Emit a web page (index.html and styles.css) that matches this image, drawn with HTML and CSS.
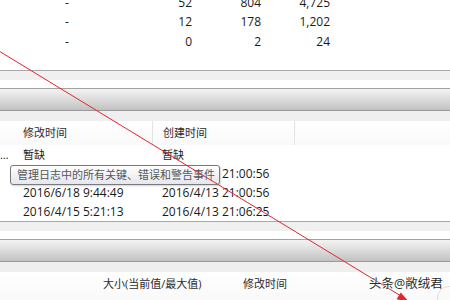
FILE: index.html
```html
<!DOCTYPE html>
<html lang="zh">
<head>
<meta charset="utf-8">
<link rel="stylesheet" href="styles.css">
</head>
<body>
<div class="page">
  <section class="stats">
    <div class="stats-rows">
      <div class="srow"><span class="sc0"></span><span class="sc1">-</span><span class="sc2">52</span><span class="sc3">804</span><span class="sc4">4,725</span></div>
      <div class="srow"><span class="sc0"></span><span class="sc1">-</span><span class="sc2">12</span><span class="sc3">178</span><span class="sc4">1,202</span></div>
      <div class="srow"><span class="sc0"></span><span class="sc1">-</span><span class="sc2">0</span><span class="sc3">2</span><span class="sc4">24</span></div>
    </div>
  </section>

  <div class="splitter"></div>
  <div class="bar"></div>
  <div class="band"></div>

  <div class="list">
    <div class="lhead">
      <span class="cell"></span>
      <span class="cell zh">修改时间</span>
      <span class="cell zh sep">创建时间</span>
      <span class="cell sep"></span>
    </div>
    <div class="lrow">
      <span class="cell trunc">…</span>
      <span class="cell zh">暂缺</span>
      <span class="cell zh">暂缺</span>
      <span class="cell"></span>
    </div>
    <div class="lrow">
      <span class="cell"></span>
      <span class="cell"></span>
      <span class="cell">2016/4/13 21:00:56</span>
      <span class="cell"></span>
    </div>
    <div class="lrow">
      <span class="cell"></span>
      <span class="cell">2016/6/18 9:44:49</span>
      <span class="cell">2016/4/13 21:00:56</span>
      <span class="cell"></span>
    </div>
    <div class="lrow">
      <span class="cell"></span>
      <span class="cell">2016/4/15 5:21:13</span>
      <span class="cell">2016/4/13 21:06:25</span>
      <span class="cell"></span>
    </div>
  </div>

  <div class="splitter"></div>
  <div class="bar"></div>
  <div class="band"></div>

  <div class="lhead lower">
    <span class="cell"></span>
    <span class="cell zh">大小(当前值/最大值)</span>
    <span class="cell zh">修改时间</span>
    <span class="cell"></span>
  </div>
</div>

<div class="tooltip">管理日志中的所有关键、错误和警告事件</div>

<svg class="annot" width="450" height="300" viewBox="0 0 450 300">
  <line x1="-6" y1="48" x2="401" y2="296" stroke="#e0262e" stroke-width="1"/>
  <polygon points="409,302 396.6,299.2 400.8,292.4" fill="#e0262e"/>
</svg>

<div class="watermark">头条@敞绒君</div>
<div class="wm-ring"></div>
</body>
</html>
```

FILE: styles.css
```css
html, body {
  margin: 0;
  padding: 0;
}
body {
  width: 450px;
  height: 300px;
  overflow: hidden;
  position: relative;
  background: #fff;
  font-family: "Open Sans", "Noto Sans", "Noto Sans CJK SC", sans-serif;
  font-size: 12px;
  color: #1a1a1a;
}
.page {
  display: flex;
  flex-direction: column;
}

/* stats table */
.stats {
  height: 70px;
  overflow: hidden;
}
.stats-rows {
  margin-top: -7.5px;
}
.srow {
  display: grid;
  grid-template-columns: 40px 54px 98px 69px 69px;
  height: 19.5px;
  line-height: 19.5px;
}
.sc1 { text-align: center; }
.sc2, .sc3, .sc4 { text-align: right; }

/* splitters and section bars */
.splitter {
  height: 17px;
  border-top: 1px solid #a9a9a9;
  background: linear-gradient(#f0f0f0 0, #f0f0f0 9px, #ffffff 9px);
}
.bar {
  height: 21px;
  border-top: 1px solid #a2a2a2;
  border-bottom: 1px solid #9a9a9a;
  background: linear-gradient(#f3f3f3, #dedede 45%, #c2c2c2);
}
.band {
  height: 10px;
  background: #efefef;
}

/* list */
.lhead,
.lrow {
  display: grid;
  grid-template-columns: 13px 139px 142px 1fr;
}
.lhead {
  height: 24px;
  line-height: 24px;
  background: linear-gradient(#ffffff, #f9f9fa);
  color: #2b2b2b;
}
.lhead .sep {
  border-left: 1px solid #e3e4e6;
  box-shadow: inset 1px 0 0 #fbfbfb;
}
.lhead.lower {
  height: 28px;
  line-height: 24px;
  grid-template-columns: 93px 140px 140px 1fr;
}
.lrow {
  height: 19px;
  line-height: 19px;
}
.cell {
  padding-left: 10px;
  white-space: nowrap;
  overflow: hidden;
}
.cell.trunc {
  padding-left: 0;
  font-size: 11px;
}
.zh {
  font-size: 11px;
}

/* tooltip overlay */
.tooltip {
  position: absolute;
  left: 10px;
  top: 165px;
  width: 196px;
  height: 18px;
  padding: 0 6px;
  line-height: 18px;
  font-size: 11px;
  color: #575757;
  border: 1px solid #7a7a7a;
  border-radius: 3px;
  background: linear-gradient(#ffffff, #e5e6ef);
  box-shadow: 1px 1px 2px rgba(0, 0, 0, 0.18);
  white-space: nowrap;
}

/* red annotation arrow */
.annot {
  position: absolute;
  left: 0;
  top: 0;
}

/* watermark */
.watermark {
  position: absolute;
  left: 369px;
  top: 276px;
  font-size: 12.5px;
  line-height: 16px;
  color: #2a2a2a;
  text-shadow: 0 0 1px #fff, 0 0 2px #fff;
}
.wm-ring {
  position: absolute;
  left: 437px;
  top: 286px;
  width: 22px;
  height: 22px;
  border: 1px solid #dcdcdc;
  border-radius: 50%;
}
```
